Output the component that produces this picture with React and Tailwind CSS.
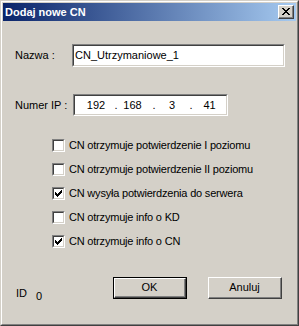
import React from "react";

const font = { fontFamily: '"Liberation Sans", Arial, sans-serif' };

function Check({ checked, label }) {
  return (
    <div className="flex items-center h-[13px]">
      <div className="w-[13px] h-[13px] border-t border-l border-b border-r border-t-[#808080] border-l-[#808080] border-b-white border-r-white">
        <div className="w-[11px] h-[11px] bg-white border-t border-l border-b border-r border-t-[#404040] border-l-[#404040] border-b-[#D4D0C8] border-r-[#D4D0C8] flex items-center justify-center">
          {checked && (
            <svg width="9" height="9" viewBox="0 0 9 9" shapeRendering="crispEdges">
              <path d="M1 3h1v3H1zM2 4h1v3H2zM3 5h1v3H3zM4 4h1v3H4zM5 3h1v3H5zM6 2h1v3H6zM7 1h1v3H7z" fill="#000" />
            </svg>
          )}
        </div>
      </div>
      <span className="ml-[4px] text-[11px] tracking-[-0.2px] text-black leading-none">{label}</span>
    </div>
  );
}

function Button({ children, def }) {
  const inner = (
    <div className="w-full h-full border-t border-l border-b border-r border-t-white border-l-white border-b-[#404040] border-r-[#404040]">
      <div className="w-full h-full border-b border-r border-b-[#808080] border-r-[#808080] flex items-center justify-center text-[11px] text-black">
        {children}
      </div>
    </div>
  );
  return (
    <div className={"w-[74px] h-[22px] " + (def ? "border border-black" : "")}>{inner}</div>
  );
}

export default function App() {
  return (
    <div style={font} className="w-[299px] h-[326px] bg-[#D4D0C8] border-t border-l border-b border-r border-t-[#D4D0C8] border-l-[#D4D0C8] border-b-[#404040] border-r-[#404040]">
      <div className="w-full h-full border-t border-l border-b border-r border-t-white border-l-white border-b-[#808080] border-r-[#808080] p-px flex flex-col">
        <div className="h-[18px] flex items-center justify-between pl-[2px] pr-[2px] bg-[linear-gradient(to_right,#0A246A,#A6CAF0)]">
          <span className="text-white font-bold text-[11px] leading-none">Dodaj nowe CN</span>
          <div className="w-[16px] h-[14px] bg-[#D4D0C8] border-t border-l border-b border-r border-t-white border-l-white border-b-[#404040] border-r-[#404040]">
            <div className="w-full h-full border-b border-r border-b-[#808080] border-r-[#808080] flex items-center justify-center">
              <svg width="8" height="7" viewBox="0 0 8 7" shapeRendering="crispEdges">
                <path d="M0 0h2v1h1v1h2V1h1V0h2v1H7v1H6v1H5v1h1v1h1v1h1v1H6V6H5V5H3v1H2v1H0V6h1V5h1V4h1V3H2V2H1V1H0z" fill="#000" />
              </svg>
            </div>
          </div>
        </div>

        <div className="pl-[12px] pr-[10px] flex flex-col">
          <div className="flex items-center mt-[23px]">
            <span className="w-[57px] text-[11px] text-black">Nazwa :</span>
            <div className="w-[213px] h-[23px] border-t border-l border-b border-r border-t-[#808080] border-l-[#808080] border-b-white border-r-white">
              <div className="w-full h-full bg-white border-t border-l border-b border-r border-t-[#404040] border-l-[#404040] border-b-[#D4D0C8] border-r-[#D4D0C8] flex items-center pl-[1px] text-[11px] text-black">
                CN_Utrzymaniowe_1
              </div>
            </div>
          </div>

          <div className="flex items-center mt-[27px]">
            <span className="w-[58px] text-[11px] text-black">Numer IP :</span>
            <div className="w-[155px] h-[22px] border-t border-l border-b border-r border-t-[#808080] border-l-[#808080] border-b-white border-r-white">
              <div className="w-full h-full bg-white border-t border-l border-b border-r border-t-[#404040] border-l-[#404040] border-b-[#D4D0C8] border-r-[#D4D0C8] flex items-center pl-[6px] text-[11px] text-black">
                <span className="w-[30px] text-center">192</span>
                <span className="w-[10px] text-center">.</span>
                <span className="w-[23px] text-center">168</span>
                <span className="w-[20px] text-center">.</span>
                <span className="w-[16px] text-center">3</span>
                <span className="w-[22px] text-center">.</span>
                <span className="w-[15px] text-center">41</span>
              </div>
            </div>
          </div>

          <div className="flex flex-col gap-[11px] mt-[23px] ml-[37px]">
            <Check label="CN otrzymuje potwierdzenie I poziomu" />
            <Check label="CN otrzymuje potwierdzenie II poziomu" />
            <Check checked label="CN wysyła potwierdzenia do serwera" />
            <Check label="CN otrzymuje info o KD" />
            <Check checked label="CN otrzymuje info o CN" />
          </div>

          <div className="flex items-start mt-[29px]">
            <div className="w-[98px] flex items-start text-[11px] text-black pt-[8px] pl-[1px]">
              <span>ID</span>
              <span className="ml-[9px] mt-[3px]">0</span>
            </div>
            <Button def>OK</Button>
            <div className="w-[21px]" />
            <Button>Anuluj</Button>
          </div>
        </div>
      </div>
    </div>
  );
}
